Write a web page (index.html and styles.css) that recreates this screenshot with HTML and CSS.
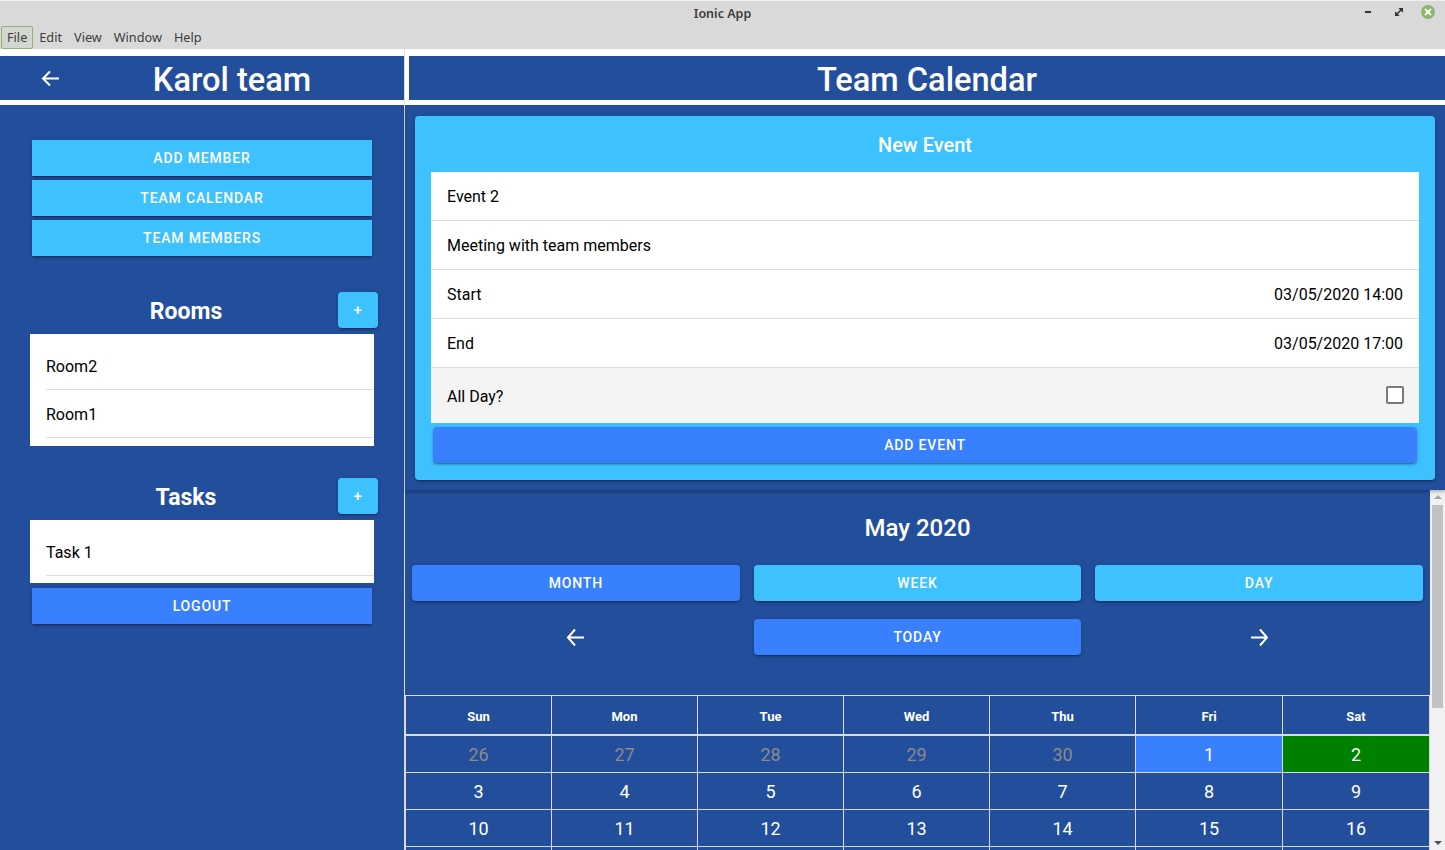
FILE: index.html
```html
<!DOCTYPE html>
<html lang="en">
<head>
<meta charset="utf-8">
<title>Ionic App</title>
<link rel="stylesheet" href="styles.css">
</head>
<body>
<div class="window">
  <div class="titlebar">
    <span class="title">Ionic App</span>
    <div class="controls">
      <span class="ctl ctl-min"></span>
      <svg class="ctl-max" width="8" height="8" viewBox="0 0 8 8"><path d="M4.5 0H8V3.5Z M0 4.5V8H3.5Z M7 1L1 7" stroke="#333" stroke-width="1.6" fill="#333"/></svg>
      <span class="ctl-close"><svg width="8" height="8" viewBox="0 0 8 8"><path d="M1 1L7 7M7 1L1 7" stroke="#fff" stroke-width="1.8"/></svg></span>
    </div>
  </div>
  <div class="menubar">
    <span class="menu active">File</span>
    <span class="menu">Edit</span>
    <span class="menu">View</span>
    <span class="menu">Window</span>
    <span class="menu">Help</span>
  </div>

  <div class="app">
    <aside class="side">
      <div class="hdr-wrap">
        <div class="toolbar side-toolbar">
          <span class="back">
            <svg width="19" height="17" viewBox="0 0 19 17"><path d="M9 1.5L2 8.5L9 15.5M2 8.5H18" fill="none" stroke="#fff" stroke-width="2"/></svg>
          </span>
          <span class="tb-title">Karol team</span>
        </div>
      </div>
      <div class="side-content">
        <button class="btn btn-sq secondary">Add member</button>
        <button class="btn btn-sq secondary">Team calendar</button>
        <button class="btn btn-sq secondary">Team members</button>

        <div class="sec-row first">
          <h2 class="sec-title">Rooms</h2>
          <button class="btn btn-plus secondary">+</button>
        </div>
        <div class="list">
          <div class="item"><span class="item-inner">Room2</span></div>
          <div class="item"><span class="item-inner">Room1</span></div>
        </div>

        <div class="sec-row second">
          <h2 class="sec-title">Tasks</h2>
          <button class="btn btn-plus secondary">+</button>
        </div>
        <div class="list list-tasks">
          <div class="item"><span class="item-inner">Task 1</span></div>
        </div>
        <button class="btn btn-sq primary logout">Logout</button>
      </div>
    </aside>
    <div class="divider"></div>
    <main class="main">
      <div class="hdr-wrap main-hdr">
        <div class="toolbar">
          <span class="tb-title center">Team Calendar</span>
        </div>
      </div>
      <div class="card-region">
        <div class="card">
          <div class="card-title">New Event</div>
          <div class="form-list">
            <div class="frow"><span>Event 2</span></div>
            <div class="frow"><span>Meeting with team members</span></div>
            <div class="frow"><span>Start</span><span>03/05/2020 14:00</span></div>
            <div class="frow"><span>End</span><span>03/05/2020 17:00</span></div>
            <div class="frow allday"><span>All Day?</span><span class="checkbox"></span></div>
          </div>
          <button class="btn primary add-event">Add event</button>
        </div>
      </div>
      <div class="scroll-area">
        <div class="scroll-content">
          <h2 class="month-title">May 2020</h2>
          <div class="btn-grid">
            <button class="btn primary">Month</button>
            <button class="btn secondary">Week</button>
            <button class="btn secondary">Day</button>
            <span class="arrow">
              <svg width="19" height="19" viewBox="0 0 19 19"><path d="M9 1.5L2 9.5L9 17.5M2 9.5H18" fill="none" stroke="#fff" stroke-width="2"/></svg>
            </span>
            <button class="btn primary">Today</button>
            <span class="arrow">
              <svg width="19" height="19" viewBox="0 0 19 19"><path d="M10 1.5L17 9.5L10 17.5M17 9.5H1" fill="none" stroke="#fff" stroke-width="2"/></svg>
            </span>
          </div>
          <div class="cal">
            <div class="ch">Sun</div><div class="ch">Mon</div><div class="ch">Tue</div><div class="ch">Wed</div><div class="ch">Thu</div><div class="ch">Fri</div><div class="ch">Sat</div>
            <div class="cd other">26</div><div class="cd other">27</div><div class="cd other">28</div><div class="cd other">29</div><div class="cd other">30</div><div class="cd today">1</div><div class="cd selected">2</div>
            <div class="cd">3</div><div class="cd">4</div><div class="cd">5</div><div class="cd">6</div><div class="cd">7</div><div class="cd">8</div><div class="cd">9</div>
            <div class="cd">10</div><div class="cd">11</div><div class="cd">12</div><div class="cd">13</div><div class="cd">14</div><div class="cd">15</div><div class="cd">16</div>
            <div class="cd">17</div><div class="cd">18</div><div class="cd">19</div><div class="cd">20</div><div class="cd">21</div><div class="cd">22</div><div class="cd">23</div>
            <div class="cd">24</div><div class="cd">25</div><div class="cd">26</div><div class="cd">27</div><div class="cd">28</div><div class="cd">29</div><div class="cd">30</div>
          </div>
        </div>
        <div class="scrollbar">
          <span class="sb-up"></span>
          <span class="sb-thumb"></span>
          <span class="sb-fill"></span>
          <span class="sb-down"></span>
        </div>
      </div>
    </main>
  </div>
</div>
</body>
</html>
```

FILE: styles.css
```css
* { box-sizing: border-box; }
html, body { margin: 0; padding: 0; }
body {
  width: 1445px;
  height: 850px;
  overflow: hidden;
  font-family: Roboto, "Liberation Sans", sans-serif;
  background: #d9d9d9;
}
.window { display: flex; flex-direction: column; height: 850px; }

/* title bar */
.titlebar {
  height: 25px;
  background: #d9d9d9;
  border-top: 1px solid #efefef;
  display: flex;
  align-items: center;
  justify-content: center;
  position: relative;
}
.title {
  font-family: "Noto Sans", "DejaVu Sans", sans-serif;
  font-size: 12.5px;
  font-weight: 600;
  color: #3c3c3c;
  margin-top: 1px;
}
.controls {
  position: absolute;
  right: 10px;
  top: 4px;
  display: flex;
  align-items: center;
  gap: 0;
}
.ctl-min {
  display: block;
  width: 6px;
  height: 2px;
  background: #333;
  margin-right: 24px;
}
.ctl-max { display: block; margin-right: 18px; }
.ctl-close {
  width: 14px;
  height: 14px;
  border-radius: 50%;
  background: #8cb46a;
  display: flex;
  align-items: center;
  justify-content: center;
}
.ctl-close svg { display: block; }

.menubar {
  height: 24px;
  background: #d9d9d9;
  display: flex;
  align-items: center;
  padding-left: 1px;
  font-family: "Noto Sans", "DejaVu Sans", sans-serif;
  font-size: 12.7px;
  color: #3c3c3c;
}
.menu { padding: 2px 5px 3px 5px; line-height: 16px; border: 1px solid transparent; }
.menu.active { border-color: #8fb46f; border-radius: 2px; background: #d4d6d2; }

/* app */
.app { flex: 1; display: flex; min-height: 0; background: #fff; }
.side { width: 404px; display: flex; flex-direction: column; background: #234e9b; }
.divider { width: 1px; background: #dcdcdc; }
.main { flex: 1; display: flex; flex-direction: column; min-width: 0; background: #234e9b; }

.hdr-wrap { background: #fff; padding: 7px 0 5px 0; }
.main-hdr { padding-left: 4px; }
.toolbar {
  height: 44px;
  background: #234e9b;
  display: flex;
  align-items: center;
  color: #fff;
}
.back { width: 60px; display: flex; justify-content: flex-start; padding-left: 41px; padding-top: 1px; }
.back svg { display: block; }
.tb-title {
  flex: 1;
  text-align: center;
  font-size: 32.6px;
  font-weight: 500;
  padding-top: 3px;
}

/* buttons */
.btn {
  display: flex;
  align-items: center;
  justify-content: center;
  height: 36px;
  border: 0;
  color: #fff;
  font-family: Roboto, "Liberation Sans", sans-serif;
  font-size: 14px;
  font-weight: 500;
  letter-spacing: 0.06em;
  text-transform: uppercase;
  border-radius: 4px;
  box-shadow: 0 3px 1px -2px rgba(0,0,0,.2), 0 2px 2px 0 rgba(0,0,0,.14), 0 1px 5px 0 rgba(0,0,0,.12);
  padding: 0;
}
.primary { background: #3880ff; }
.secondary { background: #3dc2ff; }
.btn-sq { border-radius: 0; margin: 0 2px 4px 2px; width: 340px; }

/* sidebar */
.side-content { padding: 35px 30px 0 30px; display: flex; flex-direction: column; }
.sec-row {
  display: flex;
  align-items: center;
  margin-right: -4px;
  height: 36px;
  margin-bottom: 6px;
}
.sec-row.first { margin-top: 32px; }
.sec-row.second { margin-top: 32px; }
.sec-title {
  flex: 1;
  margin: 0;
  text-align: center;
  color: #fff;
  font-size: 23px;
  font-weight: 700;
  padding-left: 4px;
  padding-top: 2px;
}
.btn-plus { width: 40px; font-size: 15px; }
.list { background: #fff; padding: 8px 0; }
.list-tasks { padding-bottom: 7px; }
.item { padding-left: 16px; }
.item-inner {
  display: flex;
  align-items: center;
  height: 48px;
  border-bottom: 1px solid #dedede;
  font-size: 16px;
  color: #000;
  padding-top: 1px;
}
.logout { margin-top: 5px; }

/* card */
.card-region { padding: 11px 10px 10px 10px; box-shadow: 0 2px 3px rgba(0,0,0,.25); position: relative; z-index: 1; }
.card {
  background: #3dc2ff;
  border-radius: 4px;
  padding: 0 16px 17px 16px;
  box-shadow: 0 3px 1px -2px rgba(0,0,0,.2), 0 2px 2px 0 rgba(0,0,0,.14), 0 1px 5px 0 rgba(0,0,0,.12);
}
.card-title {
  height: 56px;
  display: flex;
  align-items: center;
  justify-content: center;
  color: #fff;
  font-size: 20px;
  font-weight: 500;
  padding-top: 2px;
}
.form-list { background: #fff; }
.frow {
  height: 49px;
  border-bottom: 1px solid #dedede;
  display: flex;
  align-items: center;
  justify-content: space-between;
  padding: 1px 16px 0 16px;
  font-size: 16px;
  color: #000;
}
.frow.allday { height: 55px; background: #f4f4f4; border-bottom: 0; padding-top: 2px; }
.checkbox {
  width: 18px;
  height: 18px;
  border: 2px solid #7a7a7a;
  border-radius: 2px;
  background: #fff;
  margin-right: -1px;
  margin-top: -3px;
}
.add-event { margin: 4px 2px 0 2px; width: calc(100% - 4px); }

/* calendar area */
.scroll-area { flex: 1; display: flex; min-height: 0; }
.scroll-content { flex: 1; overflow: hidden; min-width: 0; }
.month-title {
  margin: 0;
  padding-top: 24px;
  height: 75px;
  line-height: 28px;
  text-align: center;
  color: #fff;
  font-size: 24px;
  font-weight: 500;
}
.btn-grid {
  display: grid;
  grid-template-columns: 1fr 1fr 1fr;
  column-gap: 14px;
  row-gap: 18px;
  padding: 0 7px;
}
.arrow { display: flex; align-items: center; justify-content: center; }
.arrow svg { display: block; }

.cal {
  margin-top: 40px;
  display: grid;
  grid-template-columns: repeat(5, 146px) 147px 147px;
  border-top: 1px solid #dcdcdc;
  border-left: 1px solid #dcdcdc;
  width: 1025px;
}
.ch {
  height: 40px;
  border-right: 1px solid #dcdcdc;
  border-bottom: 2px solid #dcdcdc;
  display: flex;
  align-items: center;
  justify-content: center;
  color: #fff;
  font-size: 13px;
  font-weight: 700;
  padding-top: 2px;
}
.cd {
  height: 37px;
  border-right: 1px solid #dcdcdc;
  border-bottom: 1px solid #dcdcdc;
  display: flex;
  align-items: center;
  justify-content: center;
  color: #fff;
  font-size: 18px;
  padding-top: 1px;
}
.cd.other { color: #8b8b8b; }
.cd.today { background: #3880ff; }
.cd.selected { background: #008000; }

.scrollbar {
  width: 15px;
  background: #f1f1f1;
  display: flex;
  flex-direction: column;
  align-items: center;
}
.sb-up {
  margin-top: 5px;
  width: 0; height: 0;
  border-left: 4px solid transparent;
  border-right: 4px solid transparent;
  border-bottom: 4px solid #a3a3a3;
}
.sb-thumb {
  margin-top: 6px;
  width: 11px;
  height: 203px;
  background: #c1c1c1;
}
.sb-fill { flex: 1; }
.sb-down {
  margin-bottom: 5px;
  width: 0; height: 0;
  border-left: 4px solid transparent;
  border-right: 4px solid transparent;
  border-top: 4px solid #505050;
}
```
